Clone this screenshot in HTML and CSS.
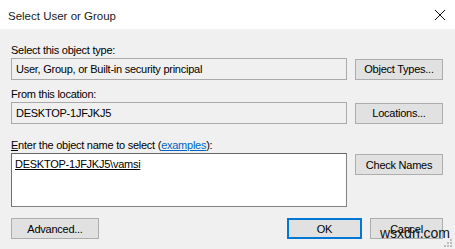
FILE: index.html
```html
<!DOCTYPE html>
<html lang="en">
<head>
  <meta charset="UTF-8">
  <title>Select User or Group</title>
  <link rel="stylesheet" href="styles.css">
</head>
<body>
  <div class="dialog">
    <div class="titlebar">
      <span class="title">Select User or Group</span>
      <svg class="close" width="12" height="12" viewBox="0 0 12 12">
        <path d="M1 1 L11 11 M11 1 L1 11" stroke="#111" stroke-width="1" fill="none"/>
      </svg>
    </div>

    <div class="content">
      <div class="group first">
        <div class="label">Select this object type:</div>
        <div class="row">
          <div class="field">User, Group, or Built-in security principal</div>
          <button class="btn side">Object Types...</button>
        </div>
      </div>

      <div class="group second">
        <div class="label">From this location:</div>
        <div class="row">
          <div class="field">DESKTOP-1JFJKJ5</div>
          <button class="btn side">Locations...</button>
        </div>
      </div>

      <div class="group third">
        <div class="label"><u>E</u>nter the object name to select (<a href="#" class="link">examples</a>):</div>
        <div class="row top">
          <div class="names"><u>DESKTOP-1JFJKJ5\vamsi</u></div>
          <button class="btn side check">Check Names</button>
        </div>
      </div>

      <div class="footer">
        <button class="btn advanced">Advanced...</button>
        <div class="actions">
          <button class="btn ok">OK</button>
          <button class="btn cancel">Cancel</button>
        </div>
      </div>
    </div>

    <div class="watermark">wsxdn.com</div>
    <svg class="grip" width="9" height="9" viewBox="0 0 9 9">
      <rect x="6" y="0" width="2" height="2" fill="#bdbdbd"/>
      <rect x="3" y="3" width="2" height="2" fill="#bdbdbd"/>
      <rect x="6" y="3" width="2" height="2" fill="#bdbdbd"/>
      <rect x="0" y="6" width="2" height="2" fill="#bdbdbd"/>
      <rect x="3" y="6" width="2" height="2" fill="#bdbdbd"/>
      <rect x="6" y="6" width="2" height="2" fill="#bdbdbd"/>
    </svg>
  </div>
</body>
</html>
```

FILE: styles.css
```css
:root {
  --dialog-bg: #f0f0f0;
  --btn-bg: #e1e1e1;
  --btn-border: #adadad;
  --field-border: #a9a9a9;
  --accent: #0078d7;
}

* {
  box-sizing: border-box;
  margin: 0;
  padding: 0;
}

body {
  width: 455px;
  height: 249px;
  overflow: hidden;
  font-family: 'Liberation Sans', Arial, sans-serif;
  font-size: 11px;
  letter-spacing: -0.25px;
  color: #000;
  background: var(--dialog-bg);
}

.dialog {
  position: relative;
  height: 249px;
}

.titlebar {
  height: 29px;
  background: #fff;
  display: flex;
  align-items: center;
  justify-content: space-between;
  padding: 0 9px 0 8px;
}

.title {
  font-size: 11.5px;
  letter-spacing: 0;
  color: #1a1a1a;
  margin-top: 2px;
}

.close {
  margin-top: 1px;
}

.content {
  padding: 0 12px 0 11px;
}

.label {
  height: 16px;
  line-height: 16px;
}

.group.first {
  padding-top: 13px;
}

.group.second {
  margin-top: 6px;
}

.group.third {
  margin-top: 13px;
}

.row {
  display: flex;
  align-items: center;
  gap: 8px;
}

.row.top {
  align-items: flex-start;
}

.field {
  flex: 1;
  height: 22px;
  line-height: 20px;
  padding-left: 4px;
  border: 1px solid var(--field-border);
  background: var(--dialog-bg);
}

.names {
  flex: 1;
  height: 54px;
  padding: 3px 0 0 3px;
  line-height: 14px;
  background: #fff;
  border: 1px solid #828282;
  border-top-color: #646464;
  border-left-color: #707070;
}

.btn {
  font-family: inherit;
  font-size: 11px;
  letter-spacing: inherit;
  color: #000;
  background: var(--btn-bg);
  border: 1px solid var(--btn-border);
  height: 21px;
  padding: 0;
}

.btn.side {
  width: 88px;
}

.btn.check {
  margin-top: 1px;
}

.footer {
  display: flex;
  justify-content: space-between;
  margin-top: 11px;
}

.btn.advanced {
  width: 88px;
}

.actions {
  display: flex;
  gap: 8px;
}

.btn.ok {
  width: 75px;
  border: 2px solid var(--accent);
}

.btn.cancel {
  width: 73px;
}

.link {
  color: #0066cc;
}

.watermark {
  position: absolute;
  left: 380px;
  top: 225px;
  font-size: 14px;
  line-height: 16px;
  letter-spacing: 0;
  color: #111;
}

.grip {
  position: absolute;
  right: 2px;
  bottom: 1px;
}
```
